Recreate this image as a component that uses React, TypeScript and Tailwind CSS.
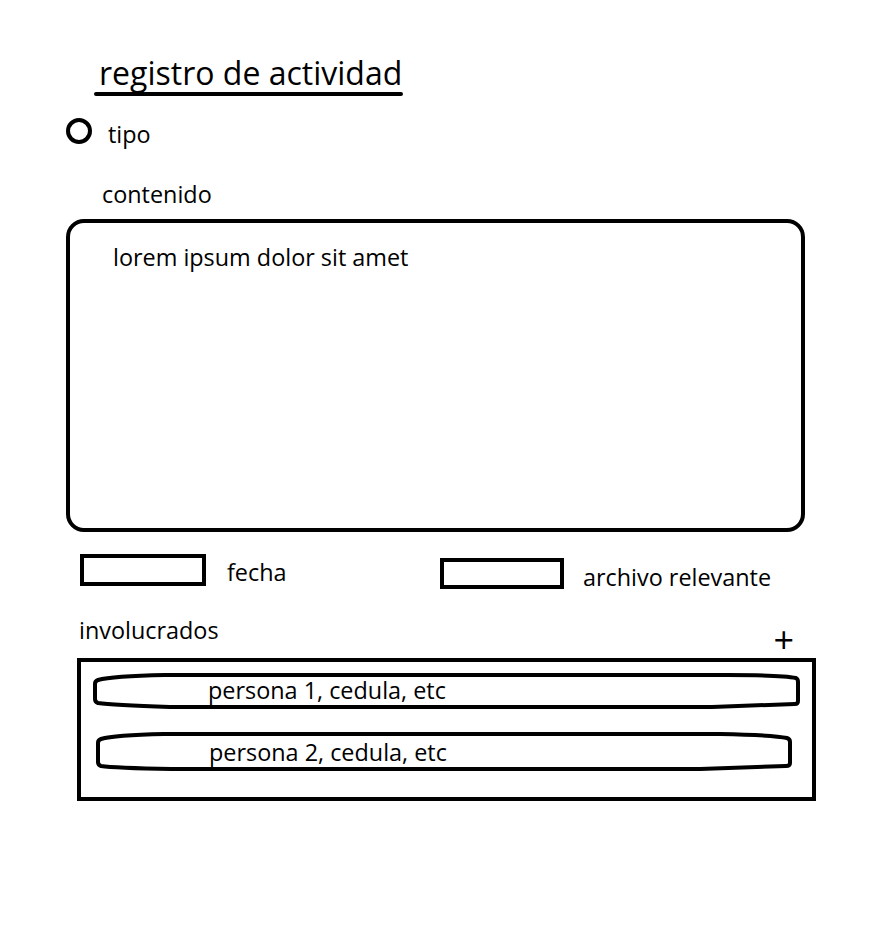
import React from "react";

const font = { fontFamily: '"Open Sans", "Noto Sans", sans-serif' };

function Pill({
  w,
  h,
  d,
  text,
  textTop,
  textLeft,
  className,
}: {
  w: number;
  h: number;
  d: string;
  text: string;
  textTop: string;
  textLeft: string;
  className: string;
}) {
  return (
    <div className={`relative ${className}`} style={{ width: w, height: h }}>
      <svg
        className="absolute inset-0"
        width={w}
        height={h}
        viewBox={`0 0 ${w} ${h}`}
        fill="none"
      >
        <path d={d} stroke="#000" strokeWidth={4} strokeLinejoin="round" />
      </svg>
      <div className={`relative ${textTop} ${textLeft} text-[23.4px] leading-[22px] whitespace-nowrap`}>{text}</div>
    </div>
  );
}

export default function App() {
  return (
    <div className="w-[876px] h-[943px] bg-white text-black flex flex-col" style={font}>
      <div className="ml-[94px] mt-[57px] w-[309px] flex flex-col">
        <div className="pl-[5px] text-[32px] leading-[31px] h-[31px] whitespace-nowrap">registro de actividad</div>
        <div className="mt-[4px] h-[4px] rounded-full bg-black" />
      </div>

      <div className="ml-[66px] mt-[22px] flex items-start">
        <div className="w-[26px] h-[26px] rounded-full border-[4.5px] border-black" />
        <span className="ml-[16px] mt-[5px] text-[23.4px] leading-[22px]">tipo</span>
      </div>

      <div className="ml-[102px] mt-[38px] text-[23.4px] leading-[22px]">contenido</div>

      <div className="ml-[66px] mt-[14px] w-[739px] h-[313px] border-4 border-black rounded-[18px] pl-[43px] pt-[23px] text-[23.4px] leading-[22px]">
        lorem ipsum dolor sit amet
      </div>

      <div className="mt-[22px] flex items-start h-[36px]">
        <div className="ml-[80px] w-[360px] flex items-start">
          <div className="w-[126px] h-[32px] border-4 border-black" />
          <span className="ml-[21px] mt-[7px] text-[23.4px] leading-[22px]">fecha</span>
        </div>
        <div className="flex items-start">
          <div className="mt-[4px] w-[124px] h-[31px] border-4 border-black" />
          <span className="ml-[19px] mt-[12px] text-[23.4px] leading-[22px] whitespace-nowrap">archivo relevante</span>
        </div>
      </div>

      <div className="mt-[27.5px] h-[40.5px] ml-[79px] w-[715px] flex items-start justify-between">
        <span className="mt-[1px] text-[23.4px] leading-[22px]">involucrados</span>
        <span className="mt-[4px] text-[36px] leading-[36px]">+</span>
      </div>

      <div className="ml-[77px] w-[739px] h-[143px] border-4 border-black flex flex-col">
        <Pill
          className="ml-[11px] mt-[9px]"
          w={709}
          h={40}
          d="M73 4 L635 4 Q690 4 704 7 Q706 8 706 11 L706 30 Q706 33 703 33 L620 36 L78 36 Q20 34 6 32 Q3 31 3 28 L3 13 Q3 10 6 9 Q20 5 73 4 Z"
          text="persona 1, cedula, etc"
          textTop="top-[8px]"
          textLeft="left-[116px]"
        />
        <Pill
          className="ml-[13px] mt-[19px]"
          w={701}
          h={43}
          d="M70 4 L626 4 Q680 5 693 8 Q696 9 696 12 L696 33 Q696 36 692 36 L606 39 L78 39 Q20 38 7 36 Q4 35 4 32 L4 13 Q4 10 7 9 Q20 5 70 4 Z"
          text="persona 2, cedula, etc"
          textTop="top-[11px]"
          textLeft="left-[115px]"
        />
      </div>
    </div>
  );
}
